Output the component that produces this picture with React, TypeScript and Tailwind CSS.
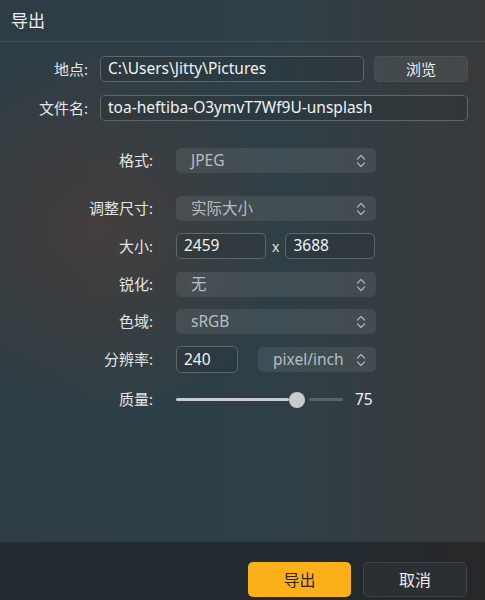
import type { ReactNode } from "react";

const FONT = {
  fontFamily: '"Noto Sans", "Noto Sans CJK SC", sans-serif',
};

function UpDown() {
  return (
    <svg width="10" height="14" viewBox="0 0 10 14" fill="none" className="text-[#aab2b6]">
      <path d="M1.5 5 5 1.5 8.5 5" stroke="currentColor" strokeWidth="1.2" strokeLinecap="round" strokeLinejoin="round" />
      <path d="M1.5 9 5 12.5 8.5 9" stroke="currentColor" strokeWidth="1.2" strokeLinecap="round" strokeLinejoin="round" />
    </svg>
  );
}

function Select({ value, className = "w-[200px]" }: { value: string; className?: string }) {
  return (
    <div
      className={`flex h-[25px] items-center justify-between rounded-[5px] bg-[#ffffff14] pl-[15px] pr-[10px] text-[15.5px] text-[#b7bec2] ${className}`}
    >
      <span>{value}</span>
      <UpDown />
    </div>
  );
}

function Field({ value, className }: { value: string; className: string }) {
  return (
    <div
      className={`flex h-[26px] items-center rounded-[5px] border border-[#5d666a] bg-[#00000014] px-[7px] text-[15.5px] text-[#f2f3f4] ${className}`}
    >
      {value}
    </div>
  );
}

function Row({ label, children, className = "" }: { label: string; children: ReactNode; className?: string }) {
  return (
    <div className={`flex items-center ${className}`}>
      <div className="w-[153px] text-right text-[15px] text-[#e3e6e7]">{label}</div>
      <div className="ml-[23px] flex items-center">{children}</div>
    </div>
  );
}

export default function App() {
  return (
    <div
      style={FONT}
      className="flex h-[600px] w-full flex-col bg-[#2f3d45] bg-[radial-gradient(ellipse_at_20%_38%,rgba(95,62,48,0.45),transparent_35%),linear-gradient(90deg,#2e3d45_0%,#2f3f47_55%,#383a3b_100%)] text-[#eceeef]"
    >
      <div className="flex h-[42px] shrink-0 items-center border-b border-[#454d51] px-[11px] text-[17px]">
        导出
      </div>

      <div className="flex flex-1 flex-col pt-[14px]">
        <div className="flex items-center">
          <div className="w-[88px] text-right text-[15px] text-[#e3e6e7]">地点:</div>
          <Field value="C:\Users\Jitty\Pictures" className="ml-[12px] w-[264px]" />
          <button className="ml-[10px] flex h-[26px] w-[94px] items-center justify-center rounded-[5px] border border-[#ffffff0d] bg-[#ffffff12] text-[15px] text-[#eceeef]">
            浏览
          </button>
        </div>
        <div className="mt-[13px] flex items-center">
          <div className="w-[88px] text-right text-[15px] text-[#e3e6e7]">文件名:</div>
          <Field value="toa-heftiba-O3ymvT7Wf9U-unsplash" className="ml-[12px] w-[368px]" />
        </div>

        <Row label="格式:" className="mt-[27px]">
          <Select value="JPEG" />
        </Row>
        <Row label="调整尺寸:" className="mt-[23px]">
          <Select value="实际大小" />
        </Row>
        <Row label="大小:" className="mt-[12px]">
          <Field value="2459" className="w-[90px]" />
          <span className="mx-[6px] text-[14px] text-[#dfe2e3]">x</span>
          <Field value="3688" className="w-[90px]" />
        </Row>
        <Row label="锐化:" className="mt-[13px]">
          <Select value="无" />
        </Row>
        <Row label="色域:" className="mt-[12px]">
          <Select value="sRGB" />
        </Row>
        <Row label="分辨率:" className="mt-[12px]">
          <Field value="240" className="h-[27px] w-[62px]" />
          <Select value="pixel/inch" className="ml-[20px] w-[118px]" />
        </Row>
        <Row label="质量:" className="mt-[15px]">
          <div className="flex h-[16px] w-[167px] items-center">
            <div className="h-[3px] w-[113px] rounded-full bg-[#c9cccd]" />
            <div className="h-[16px] w-[16px] shrink-0 rounded-full bg-[#c8cacb]" />
            <div className="ml-[4px] h-[3px] w-[34px] rounded-full bg-[#5b6366]" />
          </div>
          <span className="ml-[12px] text-[15.5px] text-[#eceeef]">75</span>
        </Row>
      </div>

      <div className="flex h-[58px] shrink-0 items-start justify-end gap-[12px] bg-[#232c31] bg-[linear-gradient(90deg,#222b30_0%,#212b31_60%,#262728_100%)] pr-[18px] pt-[20px]">
        <button className="flex h-[35px] w-[103px] items-center justify-center rounded-[5px] bg-[#fcb11b] text-[16px] text-[#2e2614]">
          导出
        </button>
        <button className="flex h-[35px] w-[104px] items-center justify-center rounded-[5px] border border-[#3f4446] bg-[#2c2f31] text-[16px] text-[#eceeef]">
          取消
        </button>
      </div>
    </div>
  );
}
